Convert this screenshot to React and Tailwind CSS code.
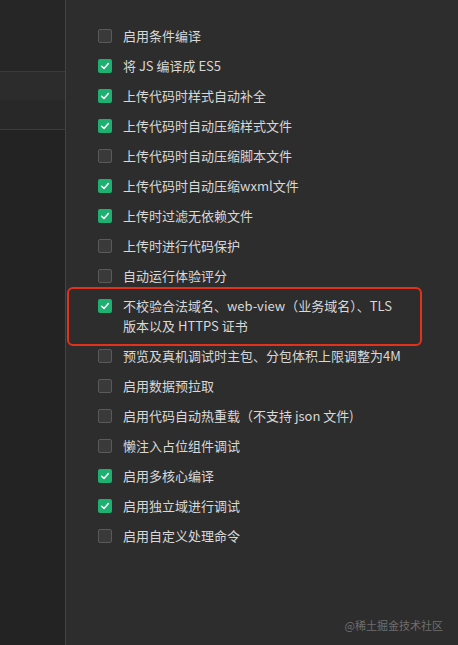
import React from 'react';

const options = [
  { label: '启用条件编译', checked: false },
  { label: '将 JS 编译成 ES5', checked: true },
  { label: '上传代码时样式自动补全', checked: true },
  { label: '上传代码时自动压缩样式文件', checked: true },
  { label: '上传代码时自动压缩脚本文件', checked: false },
  { label: '上传代码时自动压缩wxml文件', checked: true },
  { label: '上传时过滤无依赖文件', checked: true },
  { label: '上传时进行代码保护', checked: false },
  { label: '自动运行体验评分', checked: false },
  { label: ['不校验合法域名、web-view（业务域名）、TLS', '版本以及 HTTPS 证书'], checked: true, highlight: true },
  { label: '预览及真机调试时主包、分包体积上限调整为4M', checked: false },
  { label: '启用数据预拉取', checked: false },
  { label: '启用代码自动热重载（不支持 json 文件)', checked: false },
  { label: '懒注入占位组件调试', checked: false },
  { label: '启用多核心编译', checked: true },
  { label: '启用独立域进行调试', checked: true },
  { label: '启用自定义处理命令', checked: false },
];

function Checkbox({ checked }) {
  if (checked) {
    return (
      <span className="mt-[3px] flex h-[14px] w-[14px] shrink-0 items-center justify-center rounded-[2px] bg-[#1eb070]">
        <svg width="10" height="10" viewBox="0 0 10 10" fill="none">
          <polyline points="1.6,5.2 4,7.4 8.4,2.6" stroke="#ffffff" strokeWidth="1.5" strokeLinecap="round" strokeLinejoin="round" />
        </svg>
      </span>
    );
  }
  return <span className="mt-[3px] h-[14px] w-[14px] shrink-0 rounded-[2px] border border-[#5a5a5a] bg-[#3a3a3a]" />;
}

export default function App() {
  return (
    <div
      className="flex h-[645px] w-[458px] overflow-hidden bg-[#2d2d2d] text-[13px] text-[#d8d8d8]"
      style={{ fontFamily: '"Noto Sans CJK SC", "Noto Sans", sans-serif' }}
    >
      {/* sidebar */}
      <div className="flex w-[66px] shrink-0 flex-col border-r border-[#444444] bg-[#242424]">
        <div className="h-[72px] border-b border-[#3a3a3a] bg-[#262626]" />
        <div className="h-[28px] bg-[#2c2c2c]" />
        <div className="h-[30px] border-b border-[#3a3a3a] bg-[#282828]" />
        <div className="flex-1 bg-[#232323]" />
      </div>

      {/* options */}
      <div className="relative flex flex-1 flex-col pt-[21px] pl-[32px]">
        {options.map((opt, i) => (
          <div key={i} className="relative flex gap-[11px] py-[5px] leading-[20px]">
            {opt.highlight && (
              <div className="absolute top-[-4px] bottom-[-5px] left-[-31px] w-[355px] rounded-[6px] border-2 border-[#e2321c]" />
            )}
            <Checkbox checked={opt.checked} />
            <div>
              {Array.isArray(opt.label)
                ? opt.label.map((l) => <div key={l}>{l}</div>)
                : opt.label}
            </div>
          </div>
        ))}
        <div className="absolute right-[15px] bottom-[12px] text-[11px] text-[#6e6e6e]">@稀土掘金技术社区</div>
      </div>
    </div>
  );
}
